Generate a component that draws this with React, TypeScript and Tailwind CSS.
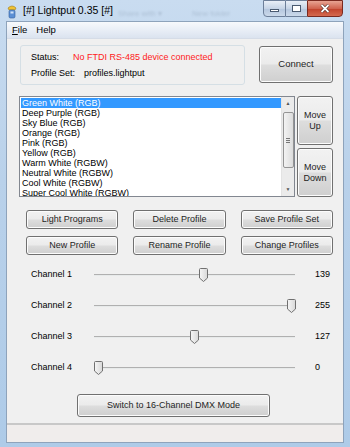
import React from 'react';

const profiles = [
  'Green White (RGB)',
  'Deep Purple (RGB)',
  'Sky Blue (RGB)',
  'Orange (RGB)',
  'Pink (RGB)',
  'Yellow (RGB)',
  'Warm White (RGBW)',
  'Neutral White (RGBW)',
  'Cool White (RGBW)',
  'Super Cool White (RGBW)',
];

const channels = [
  { name: 'Channel 1', value: 139 },
  { name: 'Channel 2', value: 255 },
  { name: 'Channel 3', value: 127 },
  { name: 'Channel 4', value: 0 },
];

const btn =
  'flex items-center justify-center rounded-[3px] border border-[#707070] bg-[linear-gradient(to_bottom,#f2f2f2_0%,#ebebeb_48%,#dddddd_52%,#cfcfcf_100%)] text-[#1e1e1e] shadow-[inset_0_0_0_1px_#fcfcfc]';

function Thumb() {
  return (
    <svg width="9" height="14" viewBox="0 0 9 14">
      <defs>
        <linearGradient id="tg" x1="0" y1="0" x2="1" y2="0">
          <stop offset="0" stopColor="#f6f6f6" />
          <stop offset="1" stopColor="#d8d8d8" />
        </linearGradient>
      </defs>
      <path d="M0.5,1.5 Q0.5,0.5 1.5,0.5 L7.5,0.5 Q8.5,0.5 8.5,1.5 L8.5,10 L4.5,13.5 L0.5,10 Z" fill="url(#tg)" stroke="#707070" />
    </svg>
  );
}

export default function App() {
  return (
    <div className="w-[350px] h-[447px] overflow-hidden flex flex-col bg-[linear-gradient(to_bottom,#c9dcf0,#b9d1ea_40%,#aecbe8)] font-['Liberation_Sans',sans-serif] text-[9px] text-black">
      {/* title bar */}
      <div className="relative h-[21px] shrink-0 flex items-center pl-[6px]">
        <div className="absolute left-[118px] top-[8px] text-[8px] text-[#6d7f95] opacity-30 blur-[1px]">Share with ▾</div>
        <div className="absolute left-[192px] top-[8px] text-[8px] text-[#6d7f95] opacity-30 blur-[1px]">New folder</div>
        <svg width="12" height="15" viewBox="0 0 12 15" className="mt-[1px]">
          <path d="M2,4 Q6,0 10,4 L9,6 L3,6 Z" fill="#f1c232" stroke="#9c7a1a" strokeWidth="0.6" />
          <rect x="3" y="6" width="6" height="8" rx="1.5" fill="#5b8fd4" stroke="#34609c" strokeWidth="0.6" />
          <rect x="4.5" y="7.5" width="3" height="2" fill="#cfe1f7" />
        </svg>
        <span className="ml-[5px] text-[10.5px] text-black font-['Segoe_UI','Liberation_Sans',sans-serif]">[#] Lightput 0.35 [#]</span>
        <div className="absolute right-[7px] top-0 flex h-[17px]">
          <div className="w-[23px] h-full border border-[#6d7f99] rounded-bl-[4px] bg-[linear-gradient(to_bottom,#e9eff7,#c6d4e6_50%,#b4c6dd_51%,#cbd9ea)] flex items-center justify-center">
            <div className="w-[9px] h-[3px] bg-white border border-[#4a5a70] mt-[4px]" />
          </div>
          <div className="w-[21px] h-full border-y border-[#6d7f99] bg-[linear-gradient(to_bottom,#e9eff7,#c6d4e6_50%,#b4c6dd_51%,#cbd9ea)] flex items-center justify-center">
            <div className="w-[9px] h-[7px] border-[1.5px] border-[#4a5a70] bg-white" />
          </div>
          <div className="w-[36px] h-full border border-[#7a2a20] rounded-br-[4px] bg-[linear-gradient(to_bottom,#e8a493,#d0644f_50%,#c0412b_51%,#d46a4f)] flex items-center justify-center">
            <svg width="10" height="9" viewBox="0 0 10 9">
              <path d="M1.5,1 L8.5,8 M8.5,1 L1.5,8" stroke="#3b1a14" strokeWidth="3" />
              <path d="M1.5,1 L8.5,8 M8.5,1 L1.5,8" stroke="#ffffff" strokeWidth="1.8" />
            </svg>
          </div>
        </div>
      </div>

      {/* client */}
      <div className="mx-[6px] flex-1 flex flex-col border border-[#8ea3bb] bg-[#f0f0f0]">
        {/* menu */}
        <div className="h-[17px] shrink-0 flex items-center gap-[9px] pl-[5px] bg-[linear-gradient(to_bottom,#f7f9fc,#e6ecf5_60%,#dbe3ef)] border-b border-[#d5dce7] text-[9.5px]">
          <span><span className="underline">F</span>ile</span>
          <span>Help</span>
        </div>

        {/* body */}
        <div className="flex-1 flex flex-col pl-[12px] pr-[10px]">
          <div className="flex items-start mt-[6px]">
            <div className="ml-[1px] w-[225px] h-[40px] border border-[#d5dfe5] rounded-[3px] flex flex-col justify-center gap-[3px] pl-[10px] pt-[1px]">
              <div className="flex">
                <span className="w-[42px]">Status:</span>
                <span className="text-[#ff1a1a]">No FTDI RS-485 device connected</span>
              </div>
              <div className="flex">
                <span className="w-[53px]">Profile Set:</span>
                <span>profiles.lightput</span>
              </div>
            </div>
            <div className={`${btn} ml-auto mt-[1px] w-[74px] h-[37px] text-[9.5px]`}>Connect</div>
          </div>

          {/* list + move buttons */}
          <div className="flex mt-[11px]">
            <div className="w-[276px] h-[101px] border border-[#828790] bg-white flex">
              <div className="flex-1 overflow-hidden pt-[1px] pl-[1px]">
                {profiles.map((p, i) => (
                  <div
                    key={p}
                    className={`h-[10px] leading-[10px] pl-[1px] ${i === 0 ? 'bg-[#3399ff] text-white' : ''}`}
                  >
                    {p}
                  </div>
                ))}
              </div>
              <div className="w-[13px] flex flex-col items-center bg-[#ebebeb] border-l border-[#e3e3e3]">
                <div className="h-[13px] flex items-center justify-center text-[5px] text-[#555]">▲</div>
                <div className="mt-[2px] w-[11px] h-[56px] rounded-[2px] border border-[#959595] bg-[linear-gradient(to_right,#f3f3f3,#dcdcdc)] flex items-center justify-center">
                  <div className="flex flex-col gap-[1px]">
                    <div className="w-[4px] h-px bg-[#777]" />
                    <div className="w-[4px] h-px bg-[#777]" />
                    <div className="w-[4px] h-px bg-[#777]" />
                  </div>
                </div>
                <div className="mt-auto h-[13px] flex items-center justify-center text-[5px] text-[#555]">▼</div>
              </div>
            </div>
            <div className="ml-[2px] flex flex-col gap-[3px]">
              <div className={`${btn} w-[36px] h-[49px] flex-col leading-[11px] text-[9px]`}>
                <span>Move</span>
                <span>Up</span>
              </div>
              <div className={`${btn} w-[36px] h-[49px] flex-col leading-[11px] text-[9px]`}>
                <span>Move</span>
                <span>Down</span>
              </div>
            </div>
          </div>

          {/* action buttons */}
          <div className="grid grid-cols-3 gap-x-[15px] gap-y-[7px] mt-[13px] ml-[7px] w-[307px]">
            {['Light Programs', 'Delete Profile', 'Save Profile Set', 'New Profile', 'Rename Profile', 'Change Profiles'].map((b) => (
              <div key={b} className={`${btn} h-[19px]`}>{b}</div>
            ))}
          </div>

          {/* channels */}
          <div className="flex flex-col mt-[12px] gap-[15px]">
            {channels.map((c) => (
              <div key={c.name} className="flex items-center h-[16px]">
                <span className="w-[63px] ml-[12px]">{c.name}</span>
                <div className="relative w-[201px] h-[16px]">
                  <div className="absolute left-0 right-0 top-[7px] h-[2px] border-t border-[#b0b0b0] bg-[#e7eaea]" />
                  <div
                    className="absolute top-[1px]"
                    style={{ left: `${(c.value / 255) * 193}px` }}
                  >
                    <Thumb />
                  </div>
                </div>
                <span className="ml-[20px]">{c.value}</span>
              </div>
            ))}
          </div>

          <div className={`${btn} ml-[58px] mt-[18px] w-[193px] h-[23px]`}>Switch to 16-Channel DMX Mode</div>
        </div>

        {/* status bar */}
        <div className="h-[19px] shrink-0 mt-[6px] border-t-2 border-[#c8c8c8] bg-[#f0edec]" />
      </div>
      <div className="h-[6px] shrink-0" />
    </div>
  );
}
